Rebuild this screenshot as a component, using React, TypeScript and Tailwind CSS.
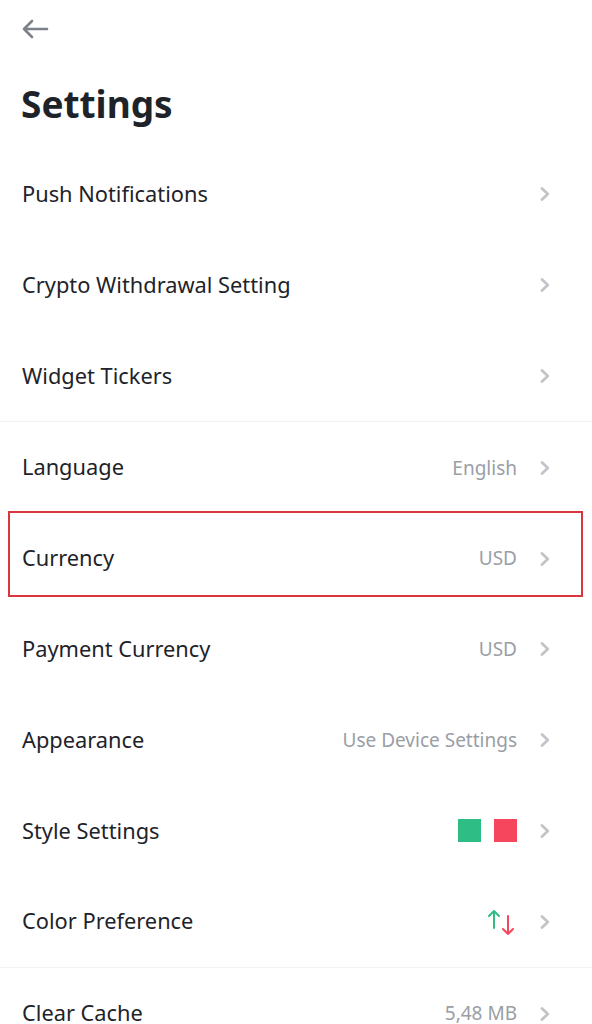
import { ReactNode } from 'react'

type Row = {
  label: string
  value?: ReactNode
  highlight?: boolean
}

function Chevron() {
  return (
    <svg width="12" height="16" viewBox="0 0 12 16" className="ml-[22px] shrink-0">
      <path d="M3 2.5 L8.8 8 L3 13.5" fill="none" stroke="#c2c4c8" strokeWidth="2.8" strokeLinecap="round" strokeLinejoin="round" />
    </svg>
  )
}

function UpDownArrows() {
  return (
    <svg width="30" height="30" viewBox="0 0 30 30">
      <path d="M7 21 V4 M2 9 L7 4 L12 9" fill="none" stroke="#2ebd85" strokeWidth="2" strokeLinecap="round" strokeLinejoin="round" />
      <path d="M21 9 V27 M16 22 L21 27 L26 22" fill="none" stroke="#f6465d" strokeWidth="2" strokeLinecap="round" strokeLinejoin="round" />
    </svg>
  )
}

function SettingRow({ label, value, highlight }: Row) {
  return (
    <div className="relative flex h-[90.8px] items-center pl-[22px] pr-[41px]">
      {highlight && (
        <div className="pointer-events-none absolute left-[8px] right-[9px] top-[-2px] h-[86px] border-2 border-[#d9363e]" />
      )}
      <span className="flex-1 text-[21.8px] text-[#1e2329]">{label}</span>
      {value && <span className="text-[19px] text-[#9a9ea5]">{value}</span>}
      <Chevron />
    </div>
  )
}

const groupOne: Row[] = [
  { label: 'Push Notifications' },
  { label: 'Crypto Withdrawal Setting' },
  { label: 'Widget Tickers' },
]

const groupTwo: Row[] = [
  { label: 'Language', value: 'English' },
  { label: 'Currency', value: 'USD', highlight: true },
  { label: 'Payment Currency', value: 'USD' },
  { label: 'Appearance', value: 'Use Device Settings' },
  {
    label: 'Style Settings',
    value: (
      <span className="flex items-center gap-[13px]">
        <span className="block h-[23px] w-[23px] bg-[#2ebd85]" />
        <span className="block h-[23px] w-[23px] bg-[#f6465d]" />
      </span>
    ),
  },
  { label: 'Color Preference', value: <span className="flex"><UpDownArrows /></span> },
]

export default function App() {
  return (
    <div className="min-h-[1024px] bg-white font-['Noto_Sans',sans-serif]">
      {/* header */}
      <div className="flex h-[58px] items-center pl-[21px]">
        <svg width="28" height="24" viewBox="0 0 28 24">
          <path d="M26 12 H3 M11 4 L3 12 L11 20" fill="none" stroke="#7d8189" strokeWidth="2.6" strokeLinecap="round" strokeLinejoin="round" />
        </svg>
      </div>
      <h1 className="flex h-[91px] items-center pl-[21px] text-[37px] font-bold text-[#1e2329]">Settings</h1>

      {groupOne.map((r) => (
        <SettingRow key={r.label} {...r} />
      ))}
      <div className="h-px bg-[#f1f2f4]" />
      {groupTwo.map((r) => (
        <SettingRow key={r.label} {...r} />
      ))}
      <div className="h-px bg-[#f1f2f4]" />
      <SettingRow label="Clear Cache" value="5,48 MB" />
    </div>
  )
}
